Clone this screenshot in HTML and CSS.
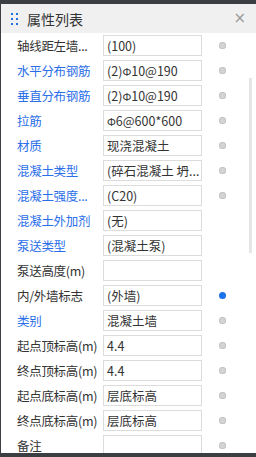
FILE: index.html
```html
<!DOCTYPE html>
<html lang="zh-CN">

<head>
    <meta charset="UTF-8">
    <meta name="viewport" content="width=device-width, initial-scale=1.0">
    <title>属性列表</title>
    <link rel="stylesheet" href="styles.css">
</head>

<body>
    <div class="panel">
        <div class="header">
            <span class="grip">
                <i></i><i></i><i></i><i></i><i></i><i></i>
            </span>
            <span class="title">属性列表</span>
            <span class="close">&times;</span>
        </div>

        <div class="list">
            <div class="rows">
                <div class="row"><span class="label">轴线距左墙...</span><span class="value">(100)</span><span class="dot"></span></div>
                <div class="row"><span class="label blue">水平分布钢筋</span><span class="value">(2)<span class="bar">Φ</span>10@190</span><span class="dot"></span></div>
                <div class="row"><span class="label blue">垂直分布钢筋</span><span class="value">(2)<span class="bar">Φ</span>10@190</span><span class="dot"></span></div>
                <div class="row"><span class="label blue">拉筋</span><span class="value"><span class="bar">Φ</span>6@600*600</span><span class="dot"></span></div>
                <div class="row"><span class="label blue">材质</span><span class="value">现浇混凝土</span><span class="dot"></span></div>
                <div class="row"><span class="label blue">混凝土类型</span><span class="value">(碎石混凝土 坍...</span><span class="dot"></span></div>
                <div class="row"><span class="label blue">混凝土强度...</span><span class="value">(C20)</span><span class="dot"></span></div>
                <div class="row"><span class="label blue">混凝土外加剂</span><span class="value">(无)</span><span class="nodot"></span></div>
                <div class="row"><span class="label blue">泵送类型</span><span class="value">(混凝土泵)</span><span class="nodot"></span></div>
                <div class="row"><span class="label">泵送高度(m)</span><span class="value"></span><span class="nodot"></span></div>
                <div class="row"><span class="label">内/外墙标志</span><span class="value">(外墙)</span><span class="dot on"></span></div>
                <div class="row"><span class="label blue">类别</span><span class="value">混凝土墙</span><span class="dot"></span></div>
                <div class="row"><span class="label">起点顶标高(m)</span><span class="value">4.4</span><span class="dot"></span></div>
                <div class="row"><span class="label">终点顶标高(m)</span><span class="value">4.4</span><span class="dot"></span></div>
                <div class="row"><span class="label">起点底标高(m)</span><span class="value">层底标高</span><span class="dot"></span></div>
                <div class="row"><span class="label">终点底标高(m)</span><span class="value">层底标高</span><span class="dot"></span></div>
                <div class="row"><span class="label">备注</span><span class="value"></span><span class="dot"></span></div>
            </div>
            <div class="scrollbar"><div class="thumb"></div></div>
        </div>
    </div>
</body>

</html>
```

FILE: styles.css
```css
body {
    margin: 0;
    font-family: "Noto Sans CJK SC", "Noto Sans", sans-serif;
    background-color: #3b3e43;
}

.panel {
    width: 255px;
    height: 449px;
    margin-top: 4px;
    margin-left: 1px;
    background-color: #fff;
    display: flex;
    flex-direction: column;
    overflow: hidden;
}

/* Header */
.header {
    height: 29px;
    flex-shrink: 0;
    background-color: #f0f0f0;
    display: flex;
    align-items: center;
    padding-left: 10px;
    padding-right: 10px;
}

.grip {
    display: grid;
    grid-template-columns: 2px 2px;
    grid-auto-rows: 2px;
    column-gap: 3px;
    row-gap: 3px;
    margin-right: 9px;
}

.grip i {
    background-color: #1f6fe5;
}

.title {
    font-size: 14px;
    color: #333;
    flex: 1;
}

.close {
    font-family: "DejaVu Sans", sans-serif;
    font-size: 15px;
    color: #9a9a9a;
    line-height: 1;
}

/* Property rows */
.list {
    flex: 1;
    display: flex;
    position: relative;
}

.rows {
    flex: 1;
}

.row {
    height: 25px;
    display: flex;
    align-items: center;
    font-size: 12.5px;
    color: #333;
}

.label {
    width: 86px;
    padding-left: 16px;
    white-space: nowrap;
    letter-spacing: -0.3px;
}

.label.blue {
    color: #2a6ee8;
}

.value {
    box-sizing: border-box;
    width: 99px;
    height: 21px;
    border: 1px solid #dcdcdc;
    padding-left: 3px;
    line-height: 19px;
    white-space: nowrap;
    overflow: hidden;
}

.bar {
    font-size: 11px;
}

.dot,
.nodot {
    width: 7px;
    height: 7px;
    border-radius: 50%;
    margin-left: 17px;
}

.dot {
    background-color: #d4d4d4;
    box-shadow: inset 0 0 0 1px #c4c4c4;
}

.dot.on {
    background-color: #1a73e8;
    box-shadow: none;
}

.scrollbar {
    position: absolute;
    top: 45px;
    right: 4px;
    width: 3px;
    height: 175px;
}

.thumb {
    height: 100%;
    background-color: #e6e6e6;
}
```
